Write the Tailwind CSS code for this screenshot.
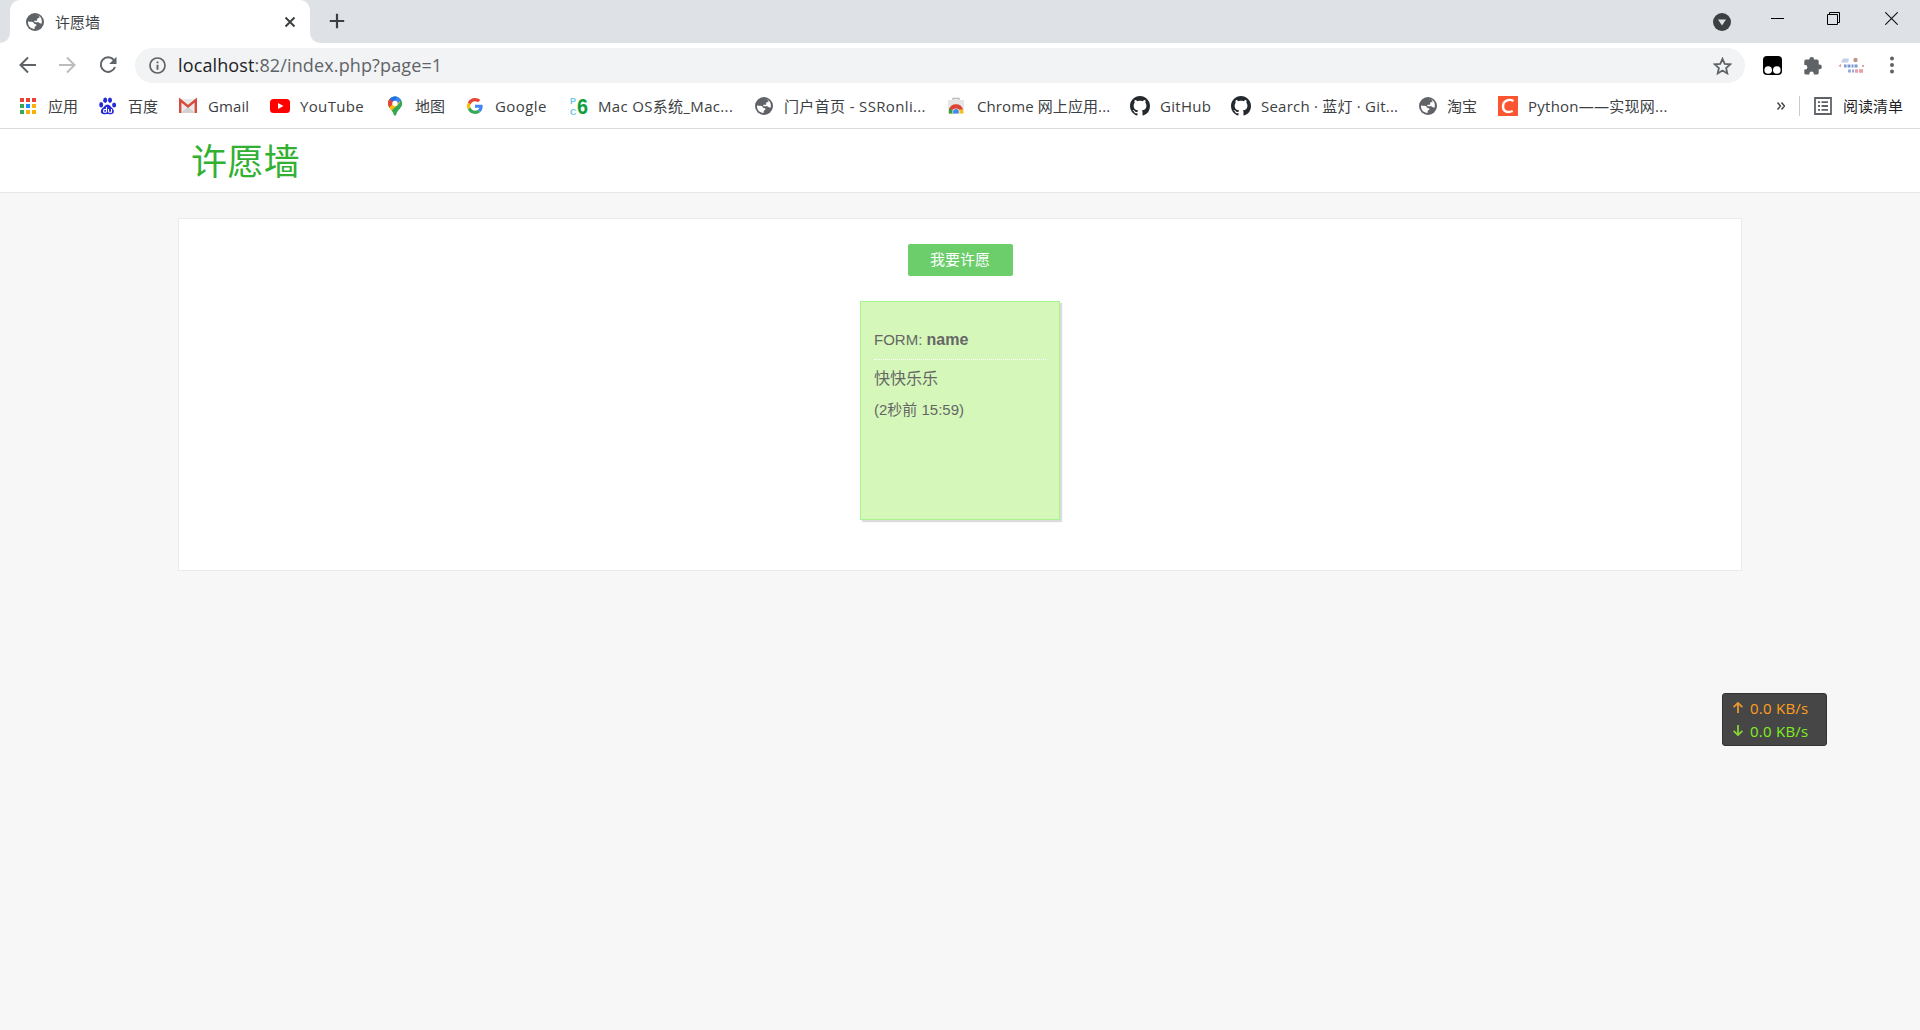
<!DOCTYPE html>
<html lang="zh-CN">

<head>
    <meta charset="UTF-8">
    <meta name="viewport" content="width=device-width, initial-scale=1.0">
    <title>许愿墙</title>
    <script src="https://cdn.jsdelivr.net/npm/@tailwindcss/browser@4"></script>
</head>

<body class="h-[1030px] overflow-hidden bg-[#f7f7f7] font-['Open_Sans','Noto_Sans_CJK_SC',sans-serif] text-[#3c4043]">
    <svg class="hidden">
        <symbol id="globe" viewBox="0 0 18 18">
            <circle cx="9" cy="9" r="9" fill="#5f6368" />
            <path fill="#fff" d="M2 8.200c1 .8 3.200.3 4.700.8 1.300.5.800 1.500 2 1.900 1.200.3 1.900.1 1.700 1.300-.2 1.100-1.700 1.100-1.800 2.200v1.500C4.700 15.900 2 12.900 2 9zM8.500 2.100c2.500-.2 4.100.8 5.200 2.100-.4 1-1.900.6-2.400 1.200-.6.800.5 1.700-.5 2.300-.8.400-1.900-.2-2.500.3-.5.500.1 1.100.9 1.200 1.400.1 3.300-.3 4 .5.600.7 1.100 1 2.500.7C16.500 6 14.500 1.700 8.500 2.100z" />
        </symbol>
        <symbol id="github" viewBox="0 0 16 16">
            <path fill="#24292e" d="M8 0C3.580 0 0 3.580 0 8c0 3.540 2.290 6.530 5.470 7.590.4.070.55-.17.55-.38 0-.19-.01-.82-.01-1.490-2.010.37-2.530-.49-2.690-.94-.09-.23-.48-.94-.82-1.130-.28-.15-.68-.52-.01-.53.630-.01 1.080.58 1.230.82.72 1.210 1.870.87 2.330.66.070-.52.28-.87.51-1.070-1.780-.2-3.640-.89-3.640-3.950 0-.87.31-1.590.82-2.150-.08-.2-.36-1.020.08-2.120 0 0 .67-.21 2.200.82.640-.18 1.320-.27 2-.27s1.360.09 2 .27c1.530-1.040 2.200-.82 2.200-.82.440 1.100.16 1.920.08 2.120.51.56.82 1.270.82 2.150 0 3.070-1.870 3.750-3.650 3.950.29.25.54.73.54 1.480 0 1.070-.01 1.930-.01 2.200 0 .21.15.46.55.38A8.010 8.010 0 0 0 16 8c0-4.420-3.580-8-8-8z" />
        </symbol>
    </svg>

    <!-- tab strip -->
    <div class="flex h-[43px] bg-[#dee1e6]">
        <div class="flex h-full w-[10px] items-end bg-white">
            <div class="h-full w-full rounded-br-[10px] bg-[#dee1e6]"></div>
        </div>
        <div class="bg-[#dee1e6]">
            <div class="flex h-full w-[300px] items-center rounded-t-[10px] bg-white pl-4 pr-[14px]">
                <svg class="h-[18px] w-[18px]"><use href="#globe" /></svg>
                <span class="ml-[11px] text-[15px] leading-5">许愿墙</span>
                <svg class="ml-auto h-3 w-3" viewBox="0 0 12 12" stroke="#3c4043" stroke-width="2"><path d="M1.500 1.500l9 9M10.500 1.500l-9 9" /></svg>
            </div>
        </div>
        <div class="h-full w-[10px] bg-white">
            <div class="h-full w-full rounded-bl-[10px] bg-[#dee1e6]"></div>
        </div>
        <svg class="ml-[9px] mt-[13px] h-4 w-4" viewBox="0 0 16 16" stroke="#3c4043" stroke-width="2.200"><path d="M8 .8v14.400M.8 8h14.400" /></svg>
        <div class="ml-auto flex pr-[22px]">
            <svg class="mt-[13px] h-[18px] w-[18px]" viewBox="0 0 18 18"><circle cx="9" cy="9" r="9" fill="#3c4043" /><path d="M5 6.500h8L9 12.500z" fill="#dee1e6" /></svg>
            <svg class="ml-10 mt-[12px] h-[13px] w-[13px]" viewBox="0 0 13 13" stroke="#000"><path d="M0 6.500h13" /></svg>
            <svg class="ml-[43px] mt-[12px] h-[13px] w-[13px]" viewBox="0 0 13 13" fill="none" stroke="#000"><path d="M.5 2.500h10v10H.5zM2.500 2.500v-2h10v10h-2" /></svg>
            <svg class="ml-[45px] mt-[12px] h-[13px] w-[13px]" viewBox="0 0 13 13" stroke="#111" stroke-width="1.100"><path d="M.3.3l12.400 12.400M12.700.3L.3 12.700" /></svg>
        </div>
    </div>

    <!-- address bar -->
    <div class="flex h-[44px] items-start bg-white pt-[5px]">
        <svg class="ml-[19px] mt-2 h-[18px] w-[17px]" viewBox="0 0 17 18" fill="none" stroke="#5f6368" stroke-width="2"><path d="M17 9H1.800M9 1.500L1.500 9 9 16.500" /></svg>
        <svg class="ml-[23px] mt-2 h-[18px] w-[17px]" viewBox="0 0 17 18" fill="none" stroke="#babcbe" stroke-width="2"><path d="M0 9h15.200M8 1.500L15.500 9 8 16.500" /></svg>
        <svg class="ml-[23px] mt-2 h-[18px] w-[18px]" viewBox="0 0 18 18" fill="none" stroke="#5f6368" stroke-width="2"><path d="M14.800 4A7.300 7.300 0 1 0 16 11" /><path fill="#5f6368" stroke="none" d="M17.500.7v7.300h-7.300z" /></svg>
        <div class="ml-[18px] flex h-[35px] w-[1610px] items-center rounded-full bg-[#f1f3f4] pl-[14px] pr-[13px]">
            <svg class="h-[17px] w-[17px]" viewBox="0 0 17 17" fill="none" stroke="#5f6368" stroke-width="1.700"><circle cx="8.500" cy="8.500" r="7.500" /><path d="M8.500 7.700v5M8.500 4.400v1.800" stroke-width="1.900" /></svg>
            <span class="-mt-[2px] ml-3 text-[18px] leading-6 tracking-[.13px] text-[#5f6368]"><span class="text-[#202124]">localhost</span>:82/index.php?page=1</span>
            <svg class="ml-auto h-[18px] w-[19px]" viewBox="0 0 19 18" fill="none" stroke="#5f6368" stroke-width="1.800"><path d="M9.500 1.800l2.200 5 5.500.5-4.100 3.700 1.200 5.400-4.800-2.900-4.800 2.900 1.200-5.400-4.100-3.700 5.500-.5z" /></svg>
        </div>
        <svg class="ml-[18px] mt-2 h-[19px] w-[19px]" viewBox="0 0 19 19"><rect width="19" height="19" rx="4" /><circle cx="5.200" cy="14" r="3.800" fill="#fff" /><circle cx="13.800" cy="14" r="3.800" fill="#fff" /></svg>
        <svg class="ml-[22px] mt-2 h-[19px] w-[18px]" viewBox="0 0 18 19" fill="#5f6368"><path d="M5.300 3.500a2.400 2.400 0 0 1 4.800 0H13a1.700 1.700 0 0 1 1.700 1.700v3.400h.8a2.300 2.300 0 0 1 0 4.700h-.8V17a1.700 1.700 0 0 1-1.700 1.600H9.800v-.8a2.200 2.200 0 0 0-4.400 0v.8H2A1.700 1.700 0 0 1 .3 17v-3.500h.9a2.200 2.200 0 0 0 0-4.400H.3V5.200A1.700 1.700 0 0 1 2 3.500z" /></svg>
        <svg class="ml-[16px] mt-[9px] h-[20px] w-[27px]" viewBox="0 0 27 20"><path d="M3 5.500l2-4h6l-1 4z" fill="#c6cfe9" /><circle cx="17.500" cy="3" r="2.200" fill="#b8998c" /><path d="M.5 9l2.500-2v3z" fill="#e88b8b" /><path d="M6 9h2.500M9.500 9h3M13.500 9h2M16.500 9h3" stroke="#7b98d3" stroke-width="3.200" /><path d="M10 14h3M14 14h2" stroke="#93addf" stroke-width="3.200" /><path d="M17 14h3M21 14h4" stroke="#eba0a5" stroke-width="3.500" /><circle cx="25" cy="9" r="1" fill="#cc8888" /></svg>
        <svg class="ml-[25px] mt-2 h-[18px] w-1" viewBox="0 0 4 18" fill="#5f6368"><circle cx="2" cy="2.600" r="2" /><circle cx="2" cy="9" r="2" /><circle cx="2" cy="15.400" r="2" /></svg>
    </div>

    <!-- bookmarks bar -->
    <div class="flex h-[42px] items-center border-b border-[#dadce0] bg-white pb-[3px] pl-[18px] text-[15px] leading-5 whitespace-nowrap">
        <div class="flex w-[81px] items-center gap-[9px]">
            <svg class="h-5 w-5" viewBox="0 0 20 20"><path fill="#ea4335" d="M2 2h4v4H2zM8 2h4v4H8zM14 2h4v4h-4z" /><path fill="#34a853" d="M2 8h4v4H2zM2 14h4v4H2z" /><path fill="#1a8cff" d="M8 8h4v4H8z" /><path fill="#fbaf0b" d="M14 8h4v4h-4zM8 14h4v4H8zM14 14h4v4h-4z" /></svg>
            <span class="ml-px">应用</span>
        </div>
        <div class="flex w-[79px] items-center gap-[9px]">
            <svg class="-ml-px mr-px h-5 w-5" viewBox="0 0 20 20" fill="#2529d8"><ellipse cx="3.200" cy="8.800" rx="2" ry="2.700" /><ellipse cx="7.200" cy="4.300" rx="2" ry="2.700" /><ellipse cx="12" cy="4.300" rx="2" ry="2.700" /><ellipse cx="16.100" cy="9" rx="2" ry="2.600" /><path d="M9.500 8.500c2.300 0 3 2.300 4.800 3.800 2.300 2 2.200 6-1.300 6-1.800 0-2.200-.3-3.500-.3s-2 .3-3.500.3c-3.600 0-4-4-1.500-6 1.900-1.500 2.700-3.800 5-3.800z" /><path fill="none" stroke="#fff" stroke-width="1.100" d="M8.500 11v5.300M8.500 13.500H6.300c-1 0-1 2.800 0 2.800h2.200M10.500 13v2.500c0 .6.300.8.800.8h2.200V13" /></svg>
            <span>百度</span>
        </div>
        <div class="flex w-[92px] items-center gap-[9px]">
            <svg class="h-5 w-5" viewBox="0 0 20 20"><path fill="#e9e9e9" d="M2 3h16v14H2z" /><path fill="#d2d2d2" d="M3 17l7-6 7 6z" /><path fill="none" stroke="#d9493d" stroke-width="2.400" d="M2.200 17V4l7.800 6.500L17.800 4v13" /></svg>
            <span class="ml-px tracking-[.1px]">Gmail</span>
        </div>
        <div class="flex w-[116px] items-center gap-[10px]">
            <svg class="h-5 w-5" viewBox="0 0 20 20"><rect y="3" width="20" height="14" rx="3.500" fill="#f00" /><path d="M8 7l5.500 3L8 13z" fill="#fff" /></svg>
            <span class="tracking-[.35px]">YouTube</span>
        </div>
        <div class="flex w-[80px] items-center gap-[9px]">
            <svg class="h-5 w-5" viewBox="0 0 20 20"><clipPath id="pin"><path d="M9 .5a7 7 0 0 1 7 7c0 4.500-5 6-6 11.500-.2 1-1.800 1-2 0C7 13.500 2 12 2 7.500a7 7 0 0 1 7-7z" /></clipPath><g clip-path="url(#pin)"><path fill="#34a853" d="M0 0h20v20H0z" /><path fill="#fbbc04" d="M0 14L14 0v7L6 18H0z" /><path fill="#4285f4" d="M4 0h12v3L6 14z" /><path fill="#1a73e8" d="M4 0h8L7 7 3 4z" /><path fill="#ea4335" d="M4 3l4 3.500L2.500 13H0V3z" /><path fill="#fbbc04" d="M2.500 13L8 6.500l4 3L5 17z" /><path fill="#34a853" d="M16 5v14H7l-2-4z" /></g><circle cx="9" cy="7.500" r="2.700" fill="#fff" /></svg>
            <span>地图</span>
        </div>
        <div class="flex w-[103px] items-center gap-[9px]">
            <svg class="-ml-px mr-px h-5 w-5" viewBox="-6 -6 60 60"><path fill="#ea4335" d="M24 9.500c3.540 0 6.710 1.220 9.210 3.600l6.850-6.850C35.900 2.380 30.470 0 24 0 14.620 0 6.510 5.380 2.560 13.220l7.980 6.190C12.430 13.720 17.740 9.500 24 9.500z" /><path fill="#4285f4" d="M46.980 24.550c0-1.570-.15-3.090-.38-4.550H24v9.020h12.940c-.58 2.960-2.260 5.480-4.780 7.180l7.730 6c4.510-4.180 7.090-10.360 7.090-17.650z" /><path fill="#fbbc05" d="M10.530 28.590A14.500 14.500 0 0 1 9.770 24c0-1.600.27-3.140.76-4.590l-7.980-6.190A24 24 0 0 0 0 24c0 3.880.92 7.540 2.560 10.780z" /><path fill="#34a853" d="M24 48c6.480 0 11.930-2.130 15.890-5.810l-7.730-6c-2.150 1.450-4.920 2.300-8.160 2.300-6.260 0-11.570-4.220-13.470-9.910l-7.980 6.190C6.510 42.620 14.620 48 24 48z" /></svg>
            <span class="tracking-[.4px]">Google</span>
        </div>
        <div class="flex w-[186px] items-center gap-[9px]">
            <svg class="h-5 w-5 overflow-visible font-['Liberation_Sans',sans-serif] font-bold" viewBox="0 0 20 20"><g fill="#6ec6ea" font-size="9"><text x="1" y="8">P</text><text x="1" y="18.500">C</text></g><text x="8" y="18" font-size="22" textLength="11" lengthAdjust="spacingAndGlyphs" fill="#109d3b">6</text></svg>
            <span class="tracking-[.33px]">Mac OS系统_Mac...</span>
        </div>
        <div class="flex w-[193px] items-center gap-[9px]">
            <span class="w-5"><svg class="h-[18px] w-[18px]"><use href="#globe" /></svg></span>
            <span class="tracking-[.35px]">门户首页 - SSRonli...</span>
        </div>
        <div class="flex w-[183px] items-center gap-[9px]">
            <svg class="-ml-px mr-px h-5 w-5" viewBox="0 0 20 20"><path d="M6 4V2.500h6V4" fill="none" stroke="#bbb" stroke-width="1.300" /><path fill="#e6e6e6" d="M1 4h16v13.500H1z" /><clipPath id="bag"><path d="M1 4h16v13.500H1z" /></clipPath><g clip-path="url(#bag)"><circle cx="9" cy="16" r="7.300" fill="#fbc116" /><path fill="#2ba24c" d="M9 16L2 12v8h7z" /><path fill="#db4437" d="M2 13.500a7.300 7.300 0 0 1 14 0z" /><circle cx="9" cy="16" r="3.600" fill="#fff" /><circle cx="9" cy="16" r="2.900" fill="#4285f4" /></g></svg>
            <span class="tracking-[.1px]">Chrome 网上应用...</span>
        </div>
        <div class="flex w-[101px] items-center gap-[9px]">
            <svg class="-ml-px mr-px h-5 w-5"><use href="#github" /></svg>
            <span class="tracking-[.3px]">GitHub</span>
        </div>
        <div class="flex w-[186px] items-center gap-[9px]">
            <svg class="-ml-px mr-px h-5 w-5"><use href="#github" /></svg>
            <span class="tracking-[.22px]">Search · 蓝灯 · Git...</span>
        </div>
        <div class="flex w-[81px] items-center gap-[9px]">
            <span class="w-5"><svg class="ml-px h-[18px] w-[18px]"><use href="#globe" /></svg></span>
            <span>淘宝</span>
        </div>
        <div class="flex items-center gap-[9px]">
            <svg class="-ml-px mr-px h-5 w-5" viewBox="0 0 20 20"><path fill="#fc5531" d="M0 0h20v20H0z" /><path fill="none" stroke="#fff" stroke-width="2.400" d="M15.500 5C11 2.500 5 4.500 5 10.500c0 5.500 5 6.500 9.700 4.500" /></svg>
            <span class="tracking-[.25px]">Python——实现网...</span>
        </div>
        <div class="ml-auto flex items-center pr-[17px]">
            <svg class="h-2 w-2" viewBox="0 0 8 8" fill="none" stroke="#3c4043" stroke-width="1.400"><path d="M.5.5L3.500 4l-3 3.500M4.500.5L7.500 4l-3 3.500" /></svg>
            <span class="ml-[14px] h-5 w-px bg-[#c8cacd]"></span>
            <svg class="ml-[14px] mr-[11px] h-[18px] w-[18px]" viewBox="0 0 18 18" fill="none" stroke="#5f6368" stroke-width="1.800"><path d="M1 1h16v16H1zM4 5.200h2M4 9h2M4 12.800h2M7.500 5.200H14M7.500 9H14M7.500 12.800H14" /></svg>
            <span class="text-[#202124]">阅读清单</span>
        </div>
    </div>

    <!-- page header -->
    <header class="h-16 border-b border-[#e7e7e7] bg-white pl-[191px]">
        <h1 class="text-[36px] leading-[66px] tracking-[.4px] text-[#32b032]">许愿墙</h1>
    </header>

    <main class="mx-auto mt-[25px] flex h-[353px] w-[1564px] flex-col items-center border border-[#ebebeb] bg-white pt-[25px] font-['Liberation_Sans','Noto_Sans_CJK_SC',sans-serif]">
        <button class="h-8 w-[105px] rounded-[2px] bg-[#6bce6b] text-[15px] leading-8 text-white">我要许愿</button>
        <div class="mt-[25px] h-[219px] w-[200px] border border-[#a6f58f] bg-[#d5f8ba] px-[13px] pt-[24px] text-[15px] text-[#666] shadow-[2px_2px_1px_#dcdcdc]">
            <p class="h-[34px] border-b border-dotted border-white leading-[28px]">FORM: <b class="text-base leading-[28px]">name</b></p>
            <p class="mt-1 text-base leading-[30px]">快快乐乐</p>
            <p class="leading-8">(2秒前 15:59)</p>
        </div>
    </main>

    <!-- network speed widget floating over the desktop -->
    <div class="absolute left-[1722px] top-[693px] flex h-[53px] w-[105px] flex-col justify-center rounded-[3px] border border-[#333] bg-[#464646] pl-[10px] text-[15px] leading-[23px]">
        <div class="flex items-center gap-[7px] text-[#ff9f1a]">
            <svg class="-mt-[1px] h-[11px] w-[10px]" viewBox="0 0 10 11" fill="none" stroke="#e8982e" stroke-width="1.800"><path d="M5 11V1M.6 5.200L5 .9l4.400 4.300" /></svg>
            <span class="tracking-[.25px]">0.0 KB/s</span>
        </div>
        <div class="flex items-center gap-[7px] text-[#7ff01f]">
            <svg class="-mt-[1px] h-[11px] w-[10px]" viewBox="0 0 10 11" fill="none" stroke="#86d43a" stroke-width="1.800"><path d="M5 0v10M.6 5.800L5 10.100l4.400-4.300" /></svg>
            <span class="tracking-[.25px]">0.0 KB/s</span>
        </div>
    </div>
</body>

</html>
